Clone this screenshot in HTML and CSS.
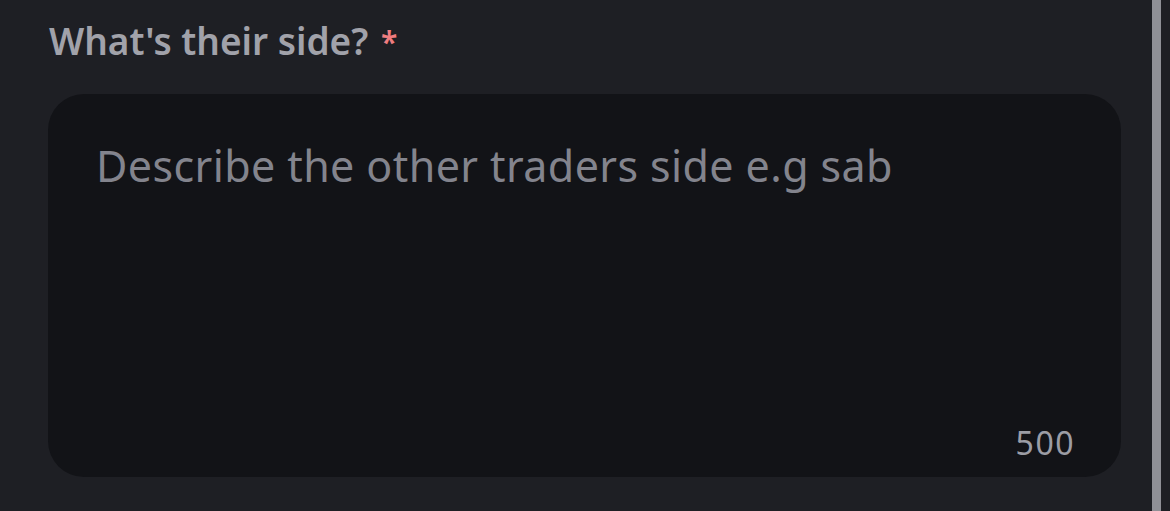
FILE: index.html
```html
<!DOCTYPE html>
<html>
<head>
<meta charset="utf-8">
<link rel="stylesheet" href="styles.css">
</head>
<body>
<div class="page">
  <div class="form">
    <label class="label">What's their side? <span class="req">*</span></label>
    <div class="field">
      <div class="placeholder">Describe the other traders side e.g sab</div>
      <div class="count">500</div>
    </div>
  </div>
  <div class="scrollbar"></div>
</div>
</body>
</html>
```
FILE: styles.css
```css
html, body {
  margin: 0;
  padding: 0;
  background: #1e1f24;
  width: 1170px;
  height: 511px;
  overflow: hidden;
}
.page {
  display: flex;
  height: 511px;
  font-family: "Noto Sans", "Open Sans", sans-serif;
}
.form {
  flex: 1;
  padding: 18px 31px 0 48px;
  display: flex;
  flex-direction: column;
}
.label {
  color: #a1a2aa;
  font-weight: 600;
  font-size: 37px;
  line-height: 46px;
  height: 46px;
  padding-left: 1px;
  margin-bottom: 30px;
}
.req {
  color: #ef7d80;
  margin-left: 3px;
  font-size: 30px;
  line-height: 1;
  vertical-align: 2px;
}
.field {
  height: 383px;
  background: #121317;
  border-radius: 36px;
  display: flex;
  flex-direction: column;
  justify-content: space-between;
  padding: 42px 46px 11px 48px;
  box-sizing: border-box;
}
.placeholder {
  color: #83848d;
  font-size: 43px;
  line-height: 60px;
  letter-spacing: 0.4px;
}
.count {
  align-self: flex-end;
  color: #9c9da5;
  font-size: 32px;
  line-height: 46px;
  letter-spacing: 1.5px;
}
.scrollbar {
  width: 9px;
  background: #8f9096;
  margin-right: 9px;
}
```
